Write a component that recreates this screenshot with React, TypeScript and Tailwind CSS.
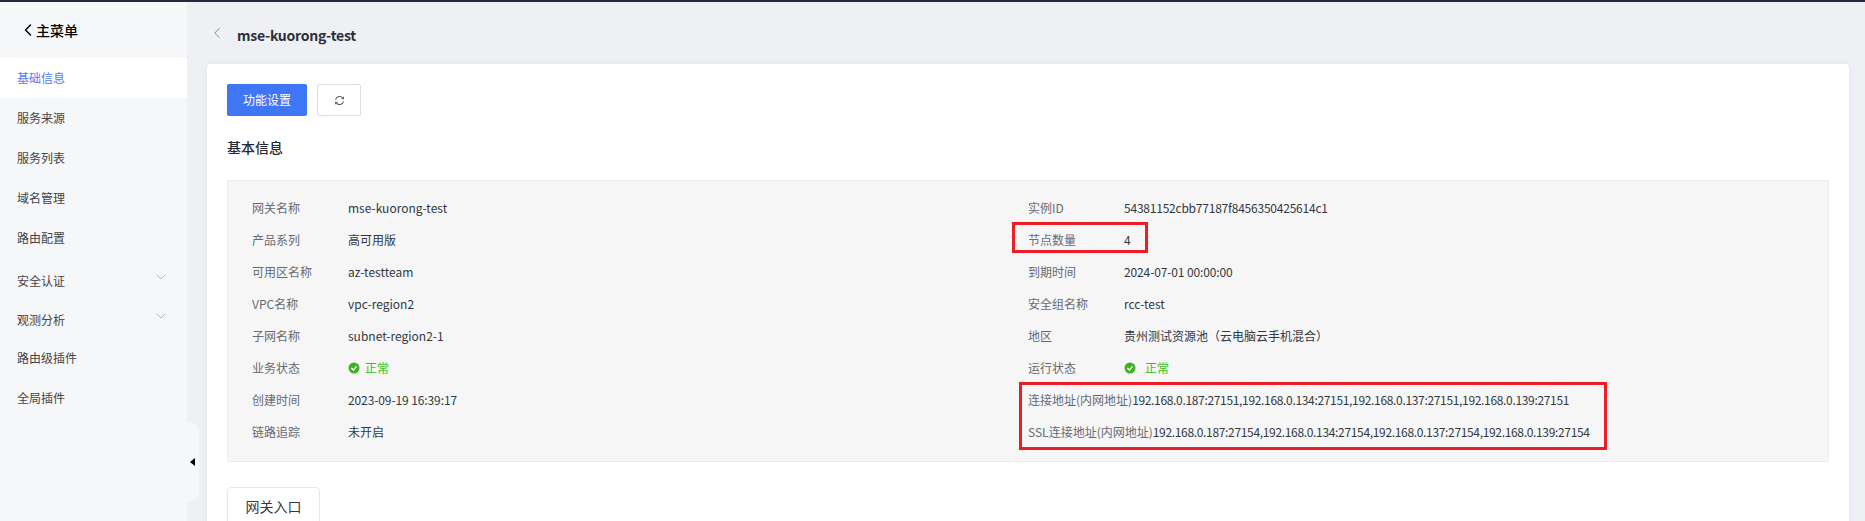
import React from "react";
import { ChevronLeft, ChevronDown } from "lucide-react";

const FONT = "[font-family:'Noto_Sans_CJK_SC','Noto_Sans',sans-serif]";

function Check() {
  return (
    <svg width="12" height="12" viewBox="0 0 12 12" className="shrink-0">
      <circle cx="6" cy="6" r="5.5" fill="#3fb21f" />
      <path d="M3.4 6.1 5.3 8 8.6 4.4" fill="none" stroke="#fff" strokeWidth="1.4" />
    </svg>
  );
}

function Status({ wide }: { wide?: boolean }) {
  return (
    <span className={wide ? "flex items-center gap-[9px] text-[#3cbd1d]" : "flex items-center gap-[5px] text-[#3cbd1d]"}>
      <Check />
      <span>正常</span>
    </span>
  );
}

const menu: [string, boolean, string][] = [
  ["服务来源", false, ""],
  ["服务列表", false, ""],
  ["域名管理", false, ""],
  ["路由配置", false, ""],
  ["安全认证", true, "pt-[6px]"],
  ["观测分析", true, "pt-[4px]"],
  ["路由级插件", false, ""],
  ["全局插件", false, ""],
];

const left: [string, React.ReactNode][] = [
  ["网关名称", "mse-kuorong-test"],
  ["产品系列", "高可用版"],
  ["可用区名称", "az-testteam"],
  ["VPC名称", "vpc-region2"],
  ["子网名称", "subnet-region2-1"],
  ["业务状态", <Status />],
  ["创建时间", <span className="tracking-[-0.1px]">2023-09-19 16:39:17</span>],
  ["链路追踪", "未开启"],
];

const right: [string, React.ReactNode][] = [
  ["实例ID", <span className="tracking-[-0.22px]">54381152cbb77187f8456350425614c1</span>],
  ["节点数量", "4"],
  ["到期时间", <span className="tracking-[-0.12px]">2024-07-01 00:00:00</span>],
  ["安全组名称", "rcc-test"],
  ["地区", "贵州测试资源池（云电脑云手机混合）"],
  ["运行状态", <Status wide />],
];

function Row({ label, value }: { label: string; value: React.ReactNode }) {
  return (
    <div className="flex h-8 items-center">
      <span className="w-[96px] shrink-0 text-[#666a73]">{label}</span>
      <span className="text-[#333840]">{value}</span>
    </div>
  );
}

export default function App() {
  return (
    <div className={`h-[521px] w-[1865px] overflow-hidden bg-[#eef0f4] text-xs ${FONT}`}>
      <div className="h-[2px] bg-[#232a3b]" />
      <div className="flex h-[519px]">
        <aside className="relative w-[187px] shrink-0 bg-[#f6f7f9] text-[#444]">
          <div className="flex h-[56px] items-center pl-[18px] text-sm font-medium text-black">
            <ChevronLeft size={20} strokeWidth={1.8} className="-mr-[2px]" />
            <span>主菜单</span>
          </div>
          <div className="flex h-10 items-center bg-white pl-[17px] text-[#4f7cf6]">基础信息</div>
          {menu.map(([name, chevron, shift]) => (
            <div key={name} className={`flex h-10 items-center justify-between pl-[17px] pr-[18px] ${shift}`}>
              <span>{name}</span>
              {chevron && <ChevronDown size={16} strokeWidth={1} className="-mt-2 text-[#8d93a0]" />}
            </div>
          ))}
          <div className="absolute left-[187px] top-[420px] z-10 flex h-[80px] w-[12px] items-center justify-center rounded-r-[10px] bg-[#f6f7f9]">
            <span className="mr-[1px] h-0 w-0 border-y-[4px] border-r-[5px] border-y-transparent border-r-black" />
          </div>
        </aside>
        <main className="min-w-0 flex-1 pl-[20px] pr-[16px]">
          <div className="flex h-[62px] items-center pt-[3px]">
            <ChevronLeft size={18} strokeWidth={1.1} className="ml-[1px] -mt-[4px] text-[#5f7aa8]" />
            <span className="ml-[11px] text-sm font-bold tracking-[-0.25px] text-[#2b303b]">mse-kuorong-test</span>
          </div>
          <section className="h-[600px] rounded-[4px] bg-white px-[20px] pt-[20px] shadow-[0_0_6px_rgba(60,70,100,0.08)]">
            <div className="flex gap-[10px]">
              <button className="h-8 w-[80px] rounded-[2px] bg-[#3f76f6] text-white">功能设置</button>
              <button className="flex h-8 w-[44px] items-center justify-center rounded-[2px] border border-[#dcdee3] bg-white">
                <svg width="11" height="11" viewBox="0 0 12 12" fill="none" stroke="#555b66" strokeWidth="1.1">
                  <path d="M1.7 5.2A4.4 4.4 0 0 1 9.6 3.4" />
                  <path d="M10.3 1.8v2.2H8.1" />
                  <path d="M10.3 6.8A4.4 4.4 0 0 1 2.4 8.6" />
                  <path d="M1.7 10.2V8h2.2" />
                </svg>
              </button>
            </div>
            <h2 className="mt-[21px] text-sm leading-[20px] font-medium text-[#262a33]">基本信息</h2>
            <div className="relative mt-[23px] h-[282px] border border-[#ebecef] bg-[#f6f6f7] px-[24px] pt-[11px]">
              <div className="grid grid-cols-2">
                <div>
                  {left.map(([l, v]) => (
                    <Row key={l} label={l} value={v} />
                  ))}
                </div>
                <div>
                  {right.map(([l, v]) => (
                    <Row key={l} label={l} value={v} />
                  ))}
                  <div className="flex h-8 items-center whitespace-nowrap">
                    <span className="text-[#666a73]">连接地址(内网地址)</span>
                    <span className="tracking-[-0.33px] text-[#333840]">192.168.0.187:27151,192.168.0.134:27151,192.168.0.137:27151,192.168.0.139:27151</span>
                  </div>
                  <div className="flex h-8 items-center whitespace-nowrap">
                    <span className="text-[#666a73]">SSL连接地址(内网地址)</span>
                    <span className="tracking-[-0.33px] text-[#333840]">192.168.0.187:27154,192.168.0.134:27154,192.168.0.137:27154,192.168.0.139:27154</span>
                  </div>
                </div>
              </div>
              <div className="pointer-events-none absolute left-[784px] top-[41px] h-[31px] w-[136px] border-[3px] border-[#ee1c25]" />
              <div className="pointer-events-none absolute left-[791px] top-[201px] h-[68px] w-[588px] border-[3px] border-[#ee1c25]" />
            </div>
            <div className="mt-[25px] flex h-10 w-[93px] items-center justify-center rounded-t-[4px] border border-[#e4e6eb] pb-[2px] text-sm text-[#333840]">
              网关入口
            </div>
          </section>
        </main>
      </div>
    </div>
  );
}
